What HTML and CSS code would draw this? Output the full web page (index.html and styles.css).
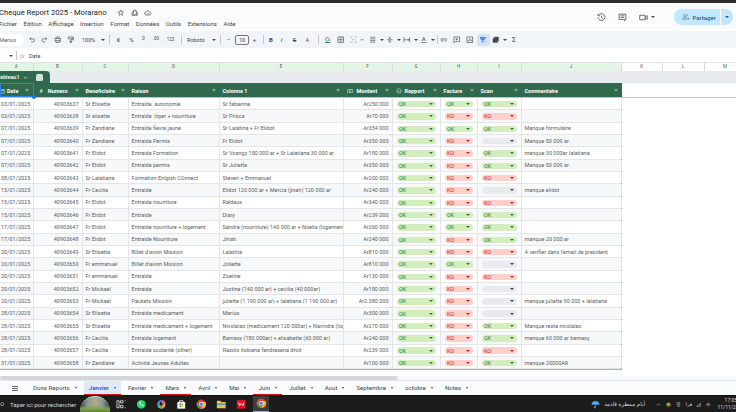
FILE: index.html
```html
<!DOCTYPE html>
<html lang="fr">
<head>
  <meta charset="UTF-8" />
  <title>Cheque Report 2025 - Morarano</title>
  <link rel="stylesheet" href="styles.css">
</head>
<body>
  <div class="topstrip"></div>

  <header class="docbar">
    <div class="docinfo">
      <div class="titleline">
        <span class="doctitle">Cheque Report 2025 - Morarano</span>
        <svg class="ico" viewBox="0 0 12 12"><path d="M6 1.500l1.300 3 3.200.3-2.400 2.100.7 3.200L6 8.400l-2.800 1.700.7-3.200L1.500 4.800l3.200-.3z"/></svg>
        <svg class="ico" viewBox="0 0 12 12"><path d="M4.500 2h3L11 8l-1.500 2.500h-7L1 8zM4.500 2L2.500 10.500M7.500 2L9.500 8.500H4"/></svg>
        <svg class="ico" viewBox="0 0 12 12"><path d="M3.500 9.500a2.500 2.500 0 0 1-.3-5 3.200 3.200 0 0 1 6 .8 2.100 2.100 0 0 1-.5 4.200zM4.500 7l1.200 1.200L7.800 6"/></svg>
      </div>
      <nav class="menus">
        <span>Fichier</span><span>Édition</span><span>Affichage</span><span>Insertion</span><span>Format</span><span>Données</span><span>Outils</span><span>Extensions</span><span>Aide</span>
      </nav>
    </div>
    <div class="docactions">
      <svg class="ico big" viewBox="0 0 12 12"><path d="M1.800 3.500A4.600 4.600 0 1 1 1.400 6M1.500 1.500v2.200h2.200M6 3.300V6l2 1.300"/></svg>
      <svg class="ico big" viewBox="0 0 12 12"><path d="M1.500 1.500h9v7.200h-1.600v1.800L7 8.700H1.500zM3.500 3.800h5M3.500 6h5"/></svg>
      <div class="meet">
        <svg class="ico big" viewBox="0 0 12 12"><path d="M1 3h7v6H1zM8 5.500L11 3.500v5L8 6.500"/></svg>
        <i class="caret"></i>
      </div>
      <div class="share">
        <span class="sharemain">
          <svg class="ico shareico" viewBox="0 0 12 12"><circle cx="4.300" cy="4" r="1.800"/><path d="M1 10V8.700c0-1 1.500-1.700 3.300-1.700s3.300.7 3.300 1.700V10zM7.500 2.300a1.800 1.800 0 0 1 0 3.400M9 7.200c1.200.3 2 .8 2 1.500V10H9.200"/></svg>
          Partager
        </span>
        <span class="sharecaret"><i class="caret blue"></i></span>
      </div>
    </div>
  </header>

  <div class="toolbar">
    <span class="menusearch">Menus</span>
    <button class="tb"><svg class="ico" viewBox="0 0 12 12"><path d="M3 4.500h5a2.500 2.500 0 0 1 0 5H5M5 2.300L2.800 4.500 5 6.700"/></svg></button>
    <button class="tb"><svg class="ico" viewBox="0 0 12 12"><path d="M9 4.500H4a2.500 2.500 0 0 0 0 5h3M7 2.300l2.200 2.200L7 6.700"/></svg></button>
    <button class="tb"><svg class="ico" viewBox="0 0 12 12"><path d="M3.500 4V1.500h5V4M3.500 8.500H1.500V4h9v4.500h-2M3.500 7h5v3.500h-5z"/></svg></button>
    <button class="tb"><svg class="ico" viewBox="0 0 12 12"><path d="M2 1.500h7.500v3H2zM9.500 3H11v3H6v2M5 8h2v3H5z"/></svg></button>
    <span class="tbtext zoomval">100%</span><i class="caret sm"></i>
    <i class="sep sep-zoom"></i>
    <span class="tbtext sym">€</span>
    <span class="tbtext sym">%</span>
    <span class="tbtext sym small">.0<sub>←</sub></span>
    <span class="tbtext sym small">.00<sub>→</sub></span>
    <span class="tbtext sym small">123</span>
    <i class="sep"></i>
    <span class="tbtext fontname">Roboto</span><i class="caret sm"></i>
    <i class="sep"></i>
    <span class="tbtext sym minus">−</span>
    <span class="sizebox">10</span>
    <span class="tbtext sym plus">+</span>
    <i class="sep sep-size"></i>
    <span class="tbtext sym bold">B</span>
    <span class="tbtext sym ital">I</span>
    <span class="tbtext sym strike">S</span>
    <span class="tbtext sym acol">A</span>
    <i class="sep sep-fill"></i>
    <button class="tb"><svg class="ico" viewBox="0 0 12 12"><path d="M5 1.500L9 5.500 5.500 8.500 2 5.500zM9.500 7l.8 1.200"/><path class="bar" d="M1.500 10.500h9"/></svg></button>
    <button class="tb"><svg class="ico" viewBox="0 0 12 12"><path d="M1.500 1.500h9v9h-9zM6 1.500v9M1.500 6h9"/></svg></button>
    <button class="tb faded"><svg class="ico" viewBox="0 0 12 12"><path d="M1.500 3.500v-2h3M7.500 1.500h3v2M10.500 8.500v2h-3M4.500 10.500h-3v-2M3 6h6"/></svg></button>
    <i class="caret sm faded"></i>
    <span class="tbgap"></span>
    <button class="tb"><svg class="ico" viewBox="0 0 12 12"><path d="M2 2h8M2 4.700h8M2 7.300h8M2 10h8"/></svg></button><i class="caret sm"></i>
    <button class="tb"><svg class="ico" viewBox="0 0 12 12"><path d="M1.500 6h9M6 1v3.500M4.500 3L6 4.500 7.500 3M6 11V7.500M4.500 9L6 7.500 7.500 9"/></svg></button><i class="caret sm"></i>
    <button class="tb"><svg class="ico" viewBox="0 0 12 12"><path d="M1.500 2v8M10.500 2v8M1.500 6h9M8 4.500L9.500 6 8 7.500"/></svg></button><i class="caret sm"></i>
    <button class="tb"><svg class="ico" viewBox="0 0 12 12"><path d="M3.500 8L6 2l2.500 6M4.400 6h3.200M1.500 10.500h9"/></svg></button><i class="caret sm"></i>
    <i class="sep sep-link"></i>
    <button class="tb"><svg class="ico" viewBox="0 0 12 12"><path d="M5 4H3.500a2 2 0 0 0 0 4H5M7 4h1.500a2 2 0 0 1 0 4H7M4 6h4"/></svg></button>
    <button class="tb"><svg class="ico" viewBox="0 0 12 12"><path d="M1.500 1.500h9v7.500H4l-2.500 2zM6 3.300v3.900M4 5.200h4"/></svg></button>
    <button class="tb"><svg class="ico" viewBox="0 0 12 12"><path d="M1.500 1.500h9v9h-9zM3.500 8.500V6.500M6 8.500v-5M8.500 8.500V5.500"/></svg></button>
    <button class="tb active"><svg class="ico solid" viewBox="0 0 12 12"><path d="M1.500 2h9v1.800h-9zM3.200 5h5.600v1.600H3.200zM5 7.800h2V10H5z"/></svg></button>
    <button class="tb"><svg class="ico fill" viewBox="0 0 12 12"><path d="M1.500 3.500h7.500v7h-7.500zM3 1.500h7.500v7"/></svg></button><i class="caret sm"></i>
    <span class="tbtext sym sigma">Σ</span>
  </div>

  <div class="formulabar">
    <i class="caret sm namecaret"></i>
    <i class="sep"></i>
    <span class="fx">fx</span>
    <span class="fxval">Date</span>
  </div>

  <div class="colheads">
    <span class="on">A</span><span class="on">B</span><span class="on">C</span><span class="on">D</span><span class="on">E</span><span class="on">F</span><span class="on">G</span><span class="on">H</span><span class="on">I</span><span class="on">J</span><span>K</span><span>L</span><span>M</span>
  </div>

  <div class="tableband">
    <div class="tabletab">
      <span class="tabname">Tableau1</span>
      <svg class="chev" viewBox="0 0 8 8"><path d="M1.500 3l2.500 2.500L6.500 3"/></svg>
      <span class="tabicon"></span>
    </div>
  </div>

  <main class="sheet">
    <div class="row thead">
      <div class="th thsel"><svg class="thico" viewBox="0 0 8 8"><path d="M1 2h6v5H1zM1 3.500h6"/></svg><span>Date</span><i class="filter"></i></div>
      <div class="th"><span class="hash">#</span><span>Numero</span><i class="filter"></i></div>
      <div class="th"><span>Beneficiaire</span><i class="filter"></i></div>
      <div class="th"><span>Raison</span><i class="filter"></i></div>
      <div class="th"><span>Colonne 1</span><i class="filter"></i></div>
      <div class="th"><svg class="thico money" viewBox="0 0 8 8"><path d="M.5 2h7v4h-7z"/><circle cx="4" cy="4" r="1"/></svg><span>Montant</span><i class="filter"></i></div>
      <div class="th"><svg class="thico" viewBox="0 0 8 8"><circle cx="4" cy="4" r="3"/><path d="M2.500 3.500L4 5l1.500-1.500"/></svg><span>Rapport</span><i class="filter"></i></div>
      <div class="th"><span>Facture</span><i class="filter"></i></div>
      <div class="th"><span>Scan</span><i class="filter"></i></div>
      <div class="th"><span>Commentaire</span><i class="filter"></i></div>
    </div>
    <div id="rows" class="rows"></div>
    <i class="seldot"></i>
  </main>

  <div class="hscroll"><div class="thumb"></div></div>

  <nav class="sheettabs">
    <span class="allsheets"><i></i></span>
    <span class="stab">Dons Reports<i class="caret sm"></i></span>
    <span class="stab current red">Janvier<i class="caret sm blue"></i></span>
    <span class="stab">Fevrier<i class="caret sm"></i></span>
    <span class="stab red">Mars<i class="caret sm"></i></span>
    <span class="stab">Avril<i class="caret sm"></i></span>
    <span class="stab">Mai<i class="caret sm"></i></span>
    <span class="stab red">Juin<i class="caret sm"></i></span>
    <span class="stab">Juillet<i class="caret sm"></i></span>
    <span class="stab">Aout<i class="caret sm"></i></span>
    <span class="stab">Septembre<i class="caret sm"></i></span>
    <span class="stab">octobre<i class="caret sm"></i></span>
    <span class="stab">Notes<i class="caret sm"></i></span>
  </nav>

  <footer class="taskbar">
    <svg class="tsearch" viewBox="0 0 8 8"><circle cx="3.500" cy="3.500" r="2.500"/></svg>
    <span class="tsearchtext">Taper ici pour rechercher</span>
    <div class="tphoto"></div>
    <div class="tapps">
      <svg class="tapp" viewBox="0 0 12 12"><path class="lineapp" d="M1 2h2.500v8H1zM5 2h3v2.500H5zM5 7.500h3V10H5zM10 2h1M10 10h1"/></svg>
      <svg class="tapp" viewBox="0 0 12 12"><circle cx="6" cy="6" r="5" fill="#25d366"/><path d="M4 3.500c-1 1.500 2 5 4.500 4.800l.3-1.300-1.300-.6-.6.600C6 6.500 5.300 5.800 5 5l.6-.6L5 3.200z" fill="#fff"/></svg>
      <svg class="tapp" viewBox="0 0 12 12"><path d="M6 1c3 0 4.500 1.500 4.500 3L8 6 6 4z" fill="#e0569b"/><path d="M10.500 4c1 3-.5 6-3 7L6 8l2-2z" fill="#f39c3c"/><path d="M7.500 11c-3 .5-6-1-6-3.500L4 6l2 2z" fill="#5fb878"/><path d="M1.500 7.500C.500 4 3 1 6 1L4 6z" fill="#3f8fe0"/></svg>
      <svg class="tapp" viewBox="0 0 12 12"><path d="M1.500 3.500h9v7.500h-9z" fill="#fff"/><path d="M4 3.500V2h4v1.500" fill="none" stroke="#fff"/><path d="M4 5h1.800v1.800H4z" fill="#f25022"/><path d="M6.200 5H8v1.800H6.200z" fill="#7fba00"/><path d="M4 7.200h1.800V9H4z" fill="#00a4ef"/><path d="M6.200 7.200H8V9H6.200z" fill="#ffb900"/></svg>
      <svg class="tapp" viewBox="0 0 12 12"><circle cx="6" cy="6" r="5.300" fill="#ea4335"/><path d="M1.500 3.400L4 8l2 3.300a5.300 5.300 0 0 1-4.500-7.900z" fill="#34a853"/><path d="M6 3.500h4.800a5.300 5.300 0 0 1-4.800 7.800L8.200 7z" fill="#fbbc05"/><circle cx="6" cy="6" r="2.500" fill="#fff"/><circle cx="6" cy="6" r="1.900" fill="#4285f4"/></svg>
      <svg class="tapp" viewBox="0 0 12 12"><path d="M1 2h4l1 1.500h5V10.500H1z" fill="#f5c242"/><path d="M1 5h10v2H1z" fill="#3f9fe0"/></svg>
      <svg class="tapp" viewBox="0 0 12 12"><path d="M1 1h10v10H1z" fill="#e3101e"/><path d="M3 4l1 3.500L6 5l2 2.500L9 4" fill="none" stroke="#fff"/></svg>
      <span class="tappactive">
        <svg class="tapp" viewBox="0 0 12 12"><circle cx="6" cy="6" r="5.300" fill="#ea4335"/><path d="M1.500 3.400L4 8l2 3.300a5.300 5.300 0 0 1-4.500-7.900z" fill="#34a853"/><path d="M6 3.500h4.800a5.300 5.300 0 0 1-4.800 7.800L8.200 7z" fill="#fbbc05"/><circle cx="6" cy="6" r="2.500" fill="#fff"/><circle cx="6" cy="6" r="1.900" fill="#4285f4"/></svg>
      </span>
    </div>
    <div class="ttray">
      <svg class="tweather" viewBox="0 0 12 12"><path d="M1 6a5 4.500 0 0 1 10 0zM6 6v4a1 1 0 0 1-2 0" fill="#56a6ee" stroke="#56a6ee" stroke-width=".6"/></svg>
      <span class="tweathertext" lang="ar" dir="rtl">أيام ممطرة قادمة</span>
      <svg class="trayico" viewBox="0 0 8 8"><path d="M1.500 5.500L4 3l2.500 2.500"/></svg>
      <svg class="trayico" viewBox="0 0 8 8"><circle cx="4" cy="4" r="3.300" fill="#8bbb3c" stroke="none"/><circle cx="5.500" cy="5.500" r="1.800" fill="#e8352b" stroke="none"/></svg>
      <svg class="trayico" viewBox="0 0 8 8"><path d="M2 1h4v3.500H2zM4 4.500V7M2.500 7h3"/></svg>
      <span class="traytext" lang="ar">فرا</span>
      <svg class="trayico" viewBox="0 0 8 8"><path d="M1 7h6V2z"/></svg>
      <svg class="trayico" viewBox="0 0 8 8"><path d="M1 3h1.500L4.500 1.500v5L2.500 5H1zM5.700 3a1.500 1.500 0 0 1 0 2"/></svg>
      <span class="clock"><span>17:05</span><span>11/11/2025</span></span>
    </div>
  </footer>

  <script>
    const data = [
      ["03/01/2025", "Sr Elisette", "Entraide&nbsp; autonomie", "Sr fabienne", "Ar250 000", "OK", "OK", ""],
      ["03/01/2025", "Sr elisette", "Entraide&nbsp; loyer + nourriture", "Sr Prisca", "Ar70 000", "KO", "KO", ""],
      ["07/01/2025", "Fr Zandiane", "Entraide fievre jaune", "Sr Lalatina + Fr Elidot", "Ar354 000", "OK", "OK", "Manque formulaire"],
      ["07/01/2025", "Fr Zandiane", "Entraide Permis", "Fr Elidot", "Ar350 000", "KO", "", "Manque 50 000 ar"],
      ["07/01/2025", "Fr Elidot", "Entraide Formation", "Sr Voangy 150 000 ar + Sr Lalatiana 30 000 ar", "Ar180 000", "KO", "OK", "manque 30 000ar lalatiana"],
      ["07/01/2025", "Fr Elidot", "Entraide permis", "Sr Juliette", "Ar350 000", "KO", "OK", "Manque 50 000 ar"],
      ["08/01/2025", "Sr Lalatiana", "Formation Enlgish COnnect", "Steven + Emmanuel", "Ar200 000", "KO", "KO", ""],
      ["15/01/2025", "Fr Cecilia", "Entraide", "Elidot 120 000 ar + Mercia (jinah) 120 000 ar", "Ar240 000", "KO", "", "manque elidot"],
      ["15/01/2025", "Fr Elidot", "Entraide nourriture", "Raldaus", "Ar340 000", "KO", "KO", ""],
      ["15/01/2025", "Fr Elidot", "Entraide", "Diary", "Ar239 000", "OK", "OK", ""],
      ["17/01/2025", "Fr Elidot", "Entraide nourriture + logement", "Sandra (nourriture) 140 000 ar + Noella (logement)", "Ar260 000", "OK", "OK", ""],
      ["17/01/2025", "Fr Elidot", "Entraide Nourriture", "Jinah", "Ar240 000", "KO", "OK", "manque 20 000 ar"],
      ["20/01/2025", "Sr Elisette", "Billet d'avion Mission", "Lalatina", "Ar810 000", "KO", "KO", "A verifier dans l'email de president"],
      ["20/01/2025", "Fr emmanuel", "Billet d'avion Mission", "Joliette", "Ar810 000", "OK", "", ""],
      ["20/01/2025", "Fr emmanuel", "Entraide", "Zoeline", "Ar130 000", "KO", "KO", ""],
      ["20/01/2025", "Fr Mickael", "Entraide", "Justine (140 000 ar) + cecilia (40 000ar)", "Ar180 000", "KO", "", ""],
      ["20/01/2025", "Fr Mickael", "Packets Mission", "juliette (1 190 000 ar) + lalatiana (1 190 000 ar)", "Ar2 380 000", "KO", "", "manque juliette 90 000 + lalatiana"],
      ["28/01/2025", "Sr Elisette", "Entraide medicament", "Marius", "Ar300 000", "KO", "", ""],
      ["28/01/2025", "Sr Elisette", "Entraide medicament + logement", "Nivolalao (medicament 120 000ar) + Narindra (logement)", "Ar270 000", "KO", "OK", "Manque reste nivolalao"],
      ["28/01/2025", "Fr Cecilia", "Entraide logement", "Bamasy (180 000ar) + elisabette (60 000 ar)", "Ar240 000", "KO", "OK", "manque 60 000 ar bamasy"],
      ["28/01/2025", "Fr Cecilia", "Entraide scolarité (other)", "Rasolo itokiana fandresena droit", "Ar239 000", "KO", "KO", ""],
      ["31/01/2025", "Fr Zandiane", "Activité Jeunes Adultes", "", "Ar100 000", "KO", "OK", "manque 20000AR"]
    ];

    function chip(val) {
      return `<div class="td"><span class="chip chip-${val || "none"}">${val}<i></i></span></div>`;
    }

    let html = "";
    data.forEach((r, i) => {
      html += `
      <div class="row">
        <div class="td">${r[0]}</div>
        <div class="td num">${40903637 + i}</div>
        <div class="td">${r[1]}</div>
        <div class="td">${r[2]}</div>
        <div class="td">${r[3]}</div>
        <div class="td num">${r[4]}</div>
        ${chip("OK")}${chip(r[5])}${chip(r[6])}
        <div class="td">${r[7]}</div>
      </div>`;
    });
    document.getElementById("rows").innerHTML = html;
  </script>
</body>
</html>
```

FILE: styles.css
```css
* {
  box-sizing: border-box;
}

html, body {
  margin: 0;
  width: 736px;
  height: 412px;
  overflow: hidden;
}

body {
  font-family: Roboto, "Liberation Sans", sans-serif;
  background: #fff;
  color: #444746;
  position: relative;
}

.topstrip {
  height: 3px;
  background: #2c2c2c;
}

.ico {
  width: 7.500px;
  height: 7.500px;
  fill: none;
  stroke: #444746;
  stroke-width: 1;
  flex: none;
}

.ico.big {
  width: 9px;
  height: 9px;
}

.ico.fill {
  fill: #444746;
  stroke-width: .6;
}

.ico.solid {
  fill: #0b57d0;
  stroke: none;
}

.ico .bar {
  stroke: #188038;
  stroke-width: 1.500;
}

.caret {
  display: inline-block;
  width: 0;
  height: 0;
  border-left: 2px solid transparent;
  border-right: 2px solid transparent;
  border-top: 2px solid #444746;
  flex: none;
}

.caret.blue {
  border-top-color: #0b57d0;
}

/* title + menus */
.docbar {
  height: 27px;
  background: #f9fbfd;
  display: flex;
  justify-content: space-between;
  padding: 3px 3px 0 0;
}

.docinfo {
  margin-left: -1px;
}

.titleline {
  display: flex;
  align-items: center;
  gap: 6px;
  height: 13px;
}

.doctitle {
  font-size: 7.600px;
  color: #1f1f1f;
  width: 112px;
  white-space: nowrap;
}

.menus {
  display: flex;
  gap: 6.500px;
  font-size: 6px;
  line-height: 9px;
}

.docactions {
  display: flex;
  align-items: center;
  gap: 12px;
  height: 18px;
  margin-top: 2px;
}

.meet {
  display: flex;
  align-items: center;
  gap: 3px;
  margin-right: 7px;
}

.share {
  display: flex;
  width: 59px;
  height: 16px;
  border-radius: 8px;
  background: #c2e7ff;
  font-size: 6px;
  font-weight: 500;
  color: #2d5a80;
  overflow: hidden;
}

.sharemain {
  flex: 1;
  display: flex;
  align-items: center;
  gap: 3px;
  padding-left: 8px;
}

.shareico {
  stroke: #2d5a80;
  stroke-width: .8;
}

.sharecaret {
  width: 13px;
  border-left: 1px solid #f9fbfd;
  display: flex;
  align-items: center;
  justify-content: center;
}

/* toolbar */
.toolbar {
  height: 17px;
  margin-top: 1px;
  background: #f1f4f9;
  display: flex;
  align-items: center;
  font-size: 5.500px;
  white-space: nowrap;
}

.menusearch {
  width: 25px;
  height: 12px;
  margin-left: -1px;
  margin-right: 1px;
  background: #fff;
  border-radius: 0 6px 6px 0;
  color: #5f6368;
  line-height: 12px;
  text-align: right;
  padding-right: 8px;
  overflow: hidden;
}

.tb {
  width: 13px;
  height: 12px;
  border: 0;
  padding: 0;
  background: none;
  border-radius: 2px;
  display: flex;
  align-items: center;
  justify-content: center;
  flex: none;
}

.tb.active {
  background: #d3e3fd;
}

.faded {
  opacity: .4;
}

.tbtext {
  flex: none;
}

.zoomval {
  margin-left: 5px;
  width: 19px;
}

.fontname {
  width: 25px;
  margin-left: 1px;
}

.sym {
  width: 13px;
  text-align: center;
  font-size: 6px;
}

.sym.small {
  font-size: 4.500px;
}

.sym sub {
  font-size: 3px;
}

.minus {
  width: 7px;
}

.plus {
  width: 11px;
}

.bold {
  font-weight: 700;
  width: 8px;
}

.ital {
  font-style: italic;
}

.strike {
  text-decoration: line-through;
}

.acol {
  font-size: 5px;
}

.sigma {
  font-size: 7px;
  margin-left: 1px;
}

.sizebox {
  width: 14px;
  height: 10px;
  margin-left: 3px;
  border: 1px solid #747775;
  border-radius: 2px;
  text-align: center;
  line-height: 8px;
  flex: none;
}

.sep {
  width: 1px;
  height: 9px;
  background: #c7c7c7;
  margin: 0 4px;
  flex: none;
}

.sep-zoom {
  margin: 0 2px 0 4px;
}

.sep-size {
  margin: 0 3px;
}

.sep-fill {
  margin: 0 2px 0 4px;
}

.sep-link {
  margin: 0 0 0 2px;
}

.tbgap {
  width: 2.500px;
  flex: none;
}

/* formula bar */
.formulabar {
  height: 13px;
  margin-top: 1px;
  display: flex;
  align-items: center;
  font-size: 5.500px;
}

.namecaret {
  margin-left: 9px;
}

.formulabar .sep {
  margin: 0 3px;
}

.fx {
  font-style: italic;
  font-family: "Liberation Serif", serif;
  color: #999;
  width: 9px;
  font-size: 6px;
}

.fxval {
  color: #444746;
}

/* column letters */
.colheads {
  display: grid;
  grid-template-columns: 33.500px 49px 46px 91px 124px 49px 48px 37px 44px 100px 41.500px 41.500px 42px;
  height: 9px;
  border-top: 1px solid #dfe3e6;
  font-size: 4.500px;
  line-height: 8px;
  text-align: center;
  color: #575a5e;
}

.colheads span {
  border-right: 1px solid #d6dbd8;
}

.colheads .on {
  background: #e3f6e6;
}

/* table name band */
.tableband {
  height: 12px;
  background: #e9eaed;
}

.tabletab {
  width: 50px;
  height: 12px;
  background: #2f6a4f;
  border-radius: 0 4px 0 0;
  color: #fff;
  display: flex;
  align-items: center;
  font-size: 5.500px;
  font-weight: 500;
}

.tabname {
  margin-left: -3px;
  width: 26px;
  white-space: nowrap;
}

.chev {
  width: 5px;
  height: 5px;
  fill: none;
  stroke: #fff;
}

.tabicon {
  width: 7px;
  height: 7px;
  background: #d5e3dc;
  border-radius: 1.500px;
  margin-left: 8px;
}

/* table */
.sheet {
  position: relative;
  width: 736px;
  height: 293px;
  background: linear-gradient(#bfc3c6, #bfc3c6) 0 14px / 100% 1px no-repeat #fff;
}

.row {
  display: grid;
  grid-template-columns: 33.500px 49px 46px 91px 124px 49px 48px 37px 44px 100px;
  width: 621.500px;
}

.thead {
  height: 14px;
  background: #2f6a4f;
  position: relative;
}

.th {
  display: flex;
  align-items: center;
  gap: 3px;
  padding: 1px 4px 0 3px;
  font-size: 5.500px;
  font-weight: 700;
  color: #fff;
  white-space: nowrap;
  overflow: hidden;
}

.thsel {
  border: 1px solid #2f7fe8;
  gap: 2px;
  padding-left: 0;
}

.thsel .thico {
  margin-left: -2px;
}

.thico {
  width: 6px;
  height: 6px;
  fill: none;
  stroke: #cfe0d7;
  stroke-width: .8;
  flex: none;
}

.thico.money {
  margin-right: 1px;
}

.hash {
  color: #cfe0d7;
  margin: 0 2px 0 3px;
}

.filter {
  margin-left: auto;
  width: 0;
  height: 0;
  border-left: 2.500px solid transparent;
  border-right: 2.500px solid transparent;
  border-top: 3px solid #7ea593;
  flex: none;
}

.seldot {
  position: absolute;
  left: 31.500px;
  top: 12px;
  width: 4px;
  height: 4px;
  border-radius: 50%;
  background: #1a73e8;
}

.rows {
  width: 621.500px;
  margin-top: 1px;
  border-right: 1px solid #93c0a2;
  border-bottom: 1px solid #93c0a2;
}

.rows .row {
  height: 12.330px;
  width: 620.500px;
  border-bottom: 1px solid #e3e5e8;
}

.rows .row:nth-child(even) {
  background: #f6f8f9;
}

.td {
  font-size: 5.500px;
  line-height: 11px;
  padding: 1px 3px 0;
  color: #5b5e61;
  border-right: 1px solid #e3e5e8;
  white-space: nowrap;
  overflow: hidden;
  display: flex;
  align-items: center;
}

.td:first-child {
  padding-left: 1px;
}

.td.num {
  justify-content: flex-end;
}

.chip {
  flex: 1;
  height: 6.500px;
  margin: 0 1px;
  border-radius: 3.500px;
  display: flex;
  align-items: center;
  padding: 0 3px 0 2.500px;
  font-size: 5.500px;
  line-height: 6px;
}

.chip i {
  margin-left: auto;
  width: 0;
  height: 0;
  border-left: 2px solid transparent;
  border-right: 2px solid transparent;
  border-top: 2px solid currentColor;
}

.chip-OK {
  background: #d4edbc;
  color: #23794a;
}

.chip-KO {
  background: #ffcfc9;
  color: #c5221f;
}

.chip-none {
  background: #e8eaed;
  color: #3c4043;
}

/* bottom */
.hscroll {
  height: 4px;
  background: #f8f9fa;
}

.thumb {
  width: 398px;
  height: 4px;
  border-radius: 2px;
  background: #d4d6d9;
}

.sheettabs {
  height: 15px;
  background: #f9fbfd;
  border-top: 1px solid #e6e8eb;
  display: flex;
  align-items: stretch;
  font-size: 6.100px;
  color: #444746;
  white-space: nowrap;
}

.allsheets {
  width: 18px;
  margin-right: 10px;
  display: flex;
  align-items: center;
  justify-content: flex-end;
}

.allsheets i {
  width: 6px;
  height: 5px;
  border-top: 1px solid #5f6368;
  border-bottom: 1px solid #5f6368;
  background: linear-gradient(#5f6368, #5f6368) center / 100% 1px no-repeat;
}

.stab {
  display: flex;
  align-items: center;
  gap: 5px;
  padding: 0 5px;
  margin-right: 2.100px;
  border-bottom: 1px solid transparent;
}

.stab .caret {
  border-left-width: 1.500px;
  border-right-width: 1.500px;
}

.stab.red {
  border-bottom-color: #e3101e;
}

.stab.current {
  background: #e1e9f7;
  color: #0b57d0;
  font-weight: 500;
}

.taskbar {
  height: 17px;
  background: #1c1c1c;
  display: flex;
  align-items: center;
  color: #d8d8d8;
  font-size: 6px;
  white-space: nowrap;
  border-top: 1px solid #111;
}

.tsearch {
  width: 5px;
  height: 5px;
  fill: none;
  stroke: #ccc;
}

.tsearchtext {
  margin-left: 5px;
  width: 70px;
}

/* the search box picture: a stone arch on grass under a pale sky */
.tphoto {
  width: 30px;
  height: 16px;
  border-radius: 15px 15px 0 0;
  background:
    linear-gradient(#0000 55%, #7da24a 80%, #5c8034 100%),
    linear-gradient(90deg, #2f4038 0, #8d9896 25%, #b5a98a 50%, #8d9896 75%, #2f4038 100%);
  border-top: 1px solid #bfe8e6;
}

.tapps {
  display: flex;
  align-items: center;
  gap: 9.500px;
  margin-left: 6px;
}

.tapp {
  width: 10.500px;
  height: 10.500px;
  flex: none;
}

.lineapp {
  fill: none;
  stroke: #d8d8d8;
}

.tappactive {
  width: 16px;
  height: 16px;
  margin-left: -3px;
  background: #3d3d3d;
  border-bottom: 1px solid #7fb2d8;
  display: flex;
  align-items: center;
  justify-content: center;
}

.ttray {
  position: absolute;
  left: 591px;
  right: 0;
  display: flex;
  align-items: center;
  gap: 5px;
  overflow: hidden;
}

.tweather {
  width: 9px;
  height: 9px;
  flex: none;
}

.tweathertext {
  font-family: "DejaVu Sans", sans-serif;
  font-size: 5.500px;
  width: 41px;
  margin: 0 5.500px 0 -1px;
  flex: none;
}

.trayico {
  width: 5px;
  height: 5px;
  fill: none;
  stroke: #d8d8d8;
  stroke-width: .8;
  flex: none;
}

.traytext {
  font-family: "DejaVu Sans", sans-serif;
  font-size: 5px;
  width: 5px;
  flex: none;
}

.clock {
  display: flex;
  flex-direction: column;
  align-items: center;
  font-size: 5px;
  line-height: 7px;
  margin-left: 2px;
  flex: none;
}
```
